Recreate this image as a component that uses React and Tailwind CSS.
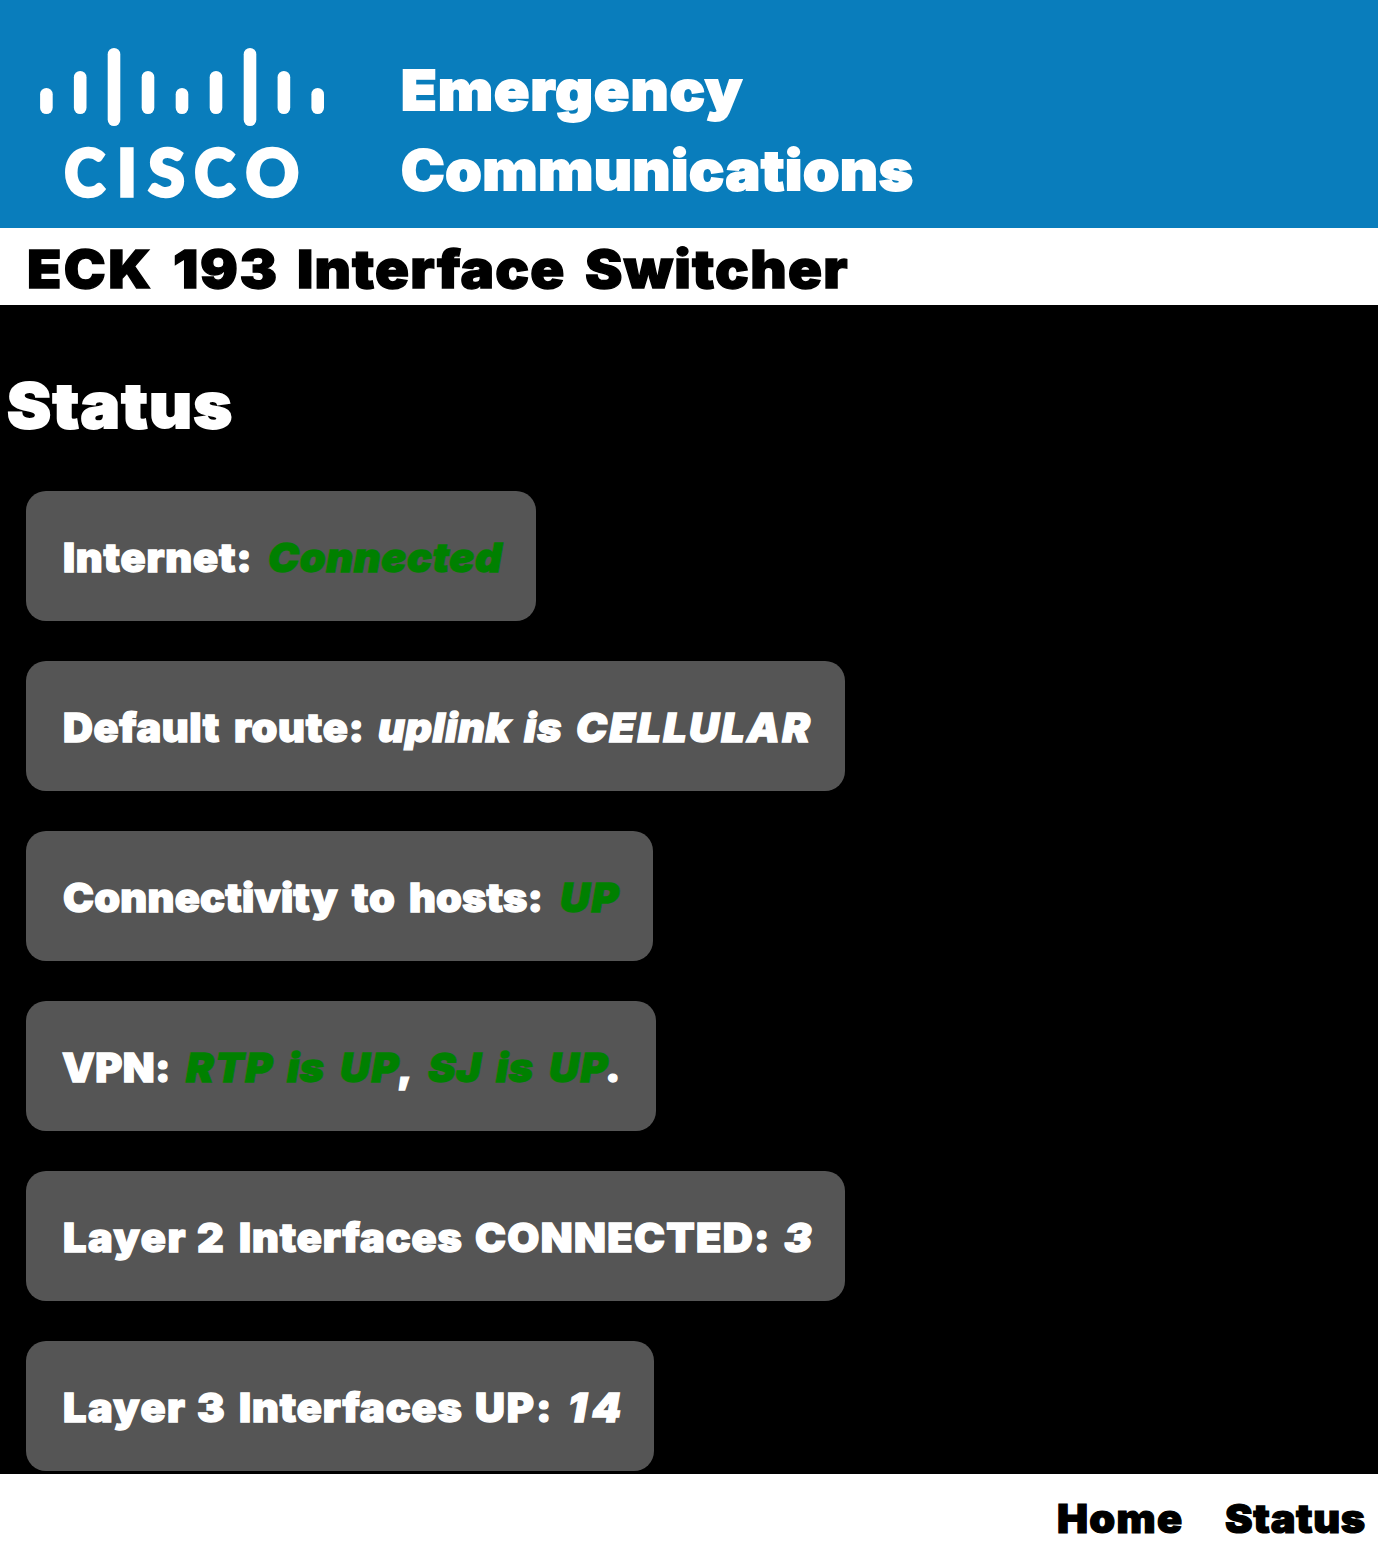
import React from "react";

const bars = [
  { x: 46.4, top: 88, bottom: 114 },
  { x: 80.2, top: 71, bottom: 114 },
  { x: 114, top: 48, bottom: 126 },
  { x: 148, top: 71, bottom: 114 },
  { x: 182, top: 88, bottom: 114 },
  { x: 216, top: 71, bottom: 114 },
  { x: 250, top: 48, bottom: 126 },
  { x: 283.9, top: 71, bottom: 114 },
  { x: 317.7, top: 88, bottom: 114 },
];

function CiscoLogo() {
  return (
    <svg className="ml-10 mt-12 h-[180px] w-[284px] shrink-0" viewBox="40 48 284 180" fill="#fff" aria-label="Cisco">
      {bars.map((b) => (
        <rect key={b.x} x={b.x - 6.3} y={b.top} width="12.6" height={b.bottom - b.top} rx="6.3" />
      ))}
      <g className="font-['Lato'] text-[65.5px] font-black" stroke="#fff" strokeWidth="3.4">
        <text y="195.6" x="64.6" textLength="40" lengthAdjust="spacingAndGlyphs">C</text>
        <text y="195.6" x="117">I</text>
        <text y="195.6" x="148.6">S</text>
        <text y="195.6" x="194.6" textLength="40" lengthAdjust="spacingAndGlyphs">C</text>
        <text y="195.6" x="245.8">O</text>
      </g>
    </svg>
  );
}

// A word in a fixed-width slot; the slot includes the space that follows.
function Word({ children, className }) {
  return <span className={`inline-block origin-left whitespace-pre ${className}`}>{children}</span>;
}

const up = "italic text-[#008000]";
const it = "italic";

const cards = [
  {
    width: "w-[510px]",
    words: [
      ["Internet: ", "w-[204.8px] tracking-[0.75px]"],
      ["Connected", "w-[236px] tracking-[0.6px]", up],
    ],
  },
  {
    width: "w-[819px]",
    words: [
      ["Default ", "w-[170.5px] tracking-[0.57px]"],
      ["route: ", "w-[144.7px] tracking-[0.7px]"],
      ["uplink ", "w-[146.2px] tracking-[0.4px]", it],
      ["is ", "w-[51.8px] tracking-[0.8px]", it],
      ["CELLULAR", "w-[238px] tracking-[2.2px]", it],
    ],
  },
  {
    width: "w-[627px]",
    words: [
      ["Connectivity ", "w-[288.9px] tracking-[0.2px]"],
      ["to ", "w-[57.1px] tracking-[0.8px]"],
      ["hosts: ", "w-[150.7px] tracking-[0.1px]"],
      ["UP", "w-[63px] tracking-[1.6px]", up],
    ],
  },
  {
    width: "w-[630px]",
    words: [
      ["VPN: ", "-ml-px w-[123.9px] tracking-[0.3px]"],
      ["RTP ", "w-[101.4px] tracking-[1.5px]", up],
      ["is ", "w-[52.9px] tracking-[0.5px]", up],
      ["UP", "w-[57.2px] tracking-[1.4px]", up],
      [", ", "w-[30.9px]"],
      ["SJ ", "w-[67.6px] tracking-[0.7px]", up],
      ["is ", "w-[52.8px] tracking-[0.5px]", up],
      ["UP", "w-[56.5px] tracking-[1.4px]", up],
      [".", "w-[12px]"],
    ],
  },
  {
    width: "w-[819px]",
    words: [
      ["Layer ", "w-[134.2px] tracking-[1.5px]"],
      ["2 ", "w-[41.6px]"],
      ["Interfaces ", "w-[236.7px] tracking-[0.83px]"],
      ["CONNECTED: ", "w-[308.7px] tracking-[1.25px]"],
      ["3", "w-[27px]", it],
    ],
  },
  {
    width: "w-[628px]",
    words: [
      ["Layer ", "w-[134.2px] tracking-[1.4px]"],
      ["3 ", "w-[41.6px]"],
      ["Interfaces ", "w-[236.7px] tracking-[0.83px]"],
      ["UP: ", "w-[92.2px] tracking-[1.8px]"],
      ["14", "w-[60px] tracking-[5px]", it],
    ],
  },
];

export default function App() {
  return (
    <div className="flex h-[1560px] w-[1378px] flex-col overflow-hidden bg-black font-['Inter',sans-serif] font-black text-white">
      <header className="flex h-[228px] shrink-0 bg-[#097dbc]">
        <CiscoLogo />
        <h1 className="ml-[77px] mt-[50px] text-[55px] leading-[80px] [-webkit-text-stroke:1.8px_white]">
          <div><Word className="scale-x-[1.06] tracking-[1.1px]">Emergency </Word></div>
          <div><Word className="scale-x-[1.06] tracking-[0.68px]">Communications</Word></div>
        </h1>
      </header>

      <h2 className="flex h-[77px] shrink-0 whitespace-nowrap bg-white pl-[27.2px] pt-[3px] text-[52.5px] leading-[77px] text-black [-webkit-text-stroke:1.3px_black]">
        <Word className="h-[74px] w-[145.4px] scale-x-[1.07] tracking-[2.2px]">{"ECK "}</Word>
        <Word className="h-[74px] w-[124.9px] scale-x-[1.07] tracking-[1.5px]">{"193 "}</Word>
        <Word className="h-[74px] w-[287.3px] scale-x-[1.07] tracking-[1.05px]">{"Interface "}</Word>
        <Word className="h-[74px] w-[265px] scale-x-[1.07] tracking-[1.15px]">Switcher</Word>
      </h2>

      <main className="h-[1169px] shrink-0">
        <h2 className="pl-[7px] pt-[60px] text-[62.5px] leading-[80px] [-webkit-text-stroke:1.8px_white]">
          <Word className="scale-x-[1.06] tracking-[1.2px]">Status</Word>
        </h2>
        <ul className="ml-[26px] mt-[46px] flex flex-col gap-10 text-[39.5px] leading-[130px]">
          {cards.map((card, i) => (
            <li key={i} className={`flex h-[130px] whitespace-nowrap rounded-[20px] bg-[#555] pl-[37px] pt-[2px] ${card.width}`}>
              {card.words.map(([text, fit, tone = ""], j) => (
                <Word
                  key={j}
                  className={`h-[128px] shrink-0 scale-x-[1.05] [-webkit-text-stroke:1.3px_currentColor] ${fit} ${tone}`}
                >
                  {text}
                </Word>
              ))}
            </li>
          ))}
        </ul>
      </main>

      <footer className="flex h-[86px] shrink-0 bg-white pl-[1057.2px] pt-[2px] text-[39.5px] leading-[86px] text-black [-webkit-text-stroke:1.2px_black]">
        <a className="w-[167.9px]"><Word className="scale-x-[1.05] tracking-[1.2px]">{"Home "}</Word></a>
        <a><Word className="scale-x-[1.05] tracking-[0.6px]">Status</Word></a>
      </footer>
    </div>
  );
}
